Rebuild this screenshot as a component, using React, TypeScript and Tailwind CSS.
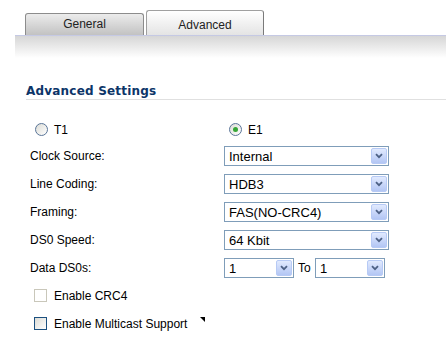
import React from "react";

function Arrow() {
  return (
    <span className="flex h-[16px] w-[16px] shrink-0 items-center justify-center rounded-[2px] border border-[#b7caf5] bg-gradient-to-b from-[#e1eafe] to-[#b3c6f4]">
      <svg width="8" height="6" viewBox="0 0 8 6">
        <path d="M1 1.2 L4 4.2 L7 1.2" stroke="#4d6185" strokeWidth="1.8" fill="none" />
      </svg>
    </span>
  );
}

function Select({ value, w }: { value: string; w: string }) {
  return (
    <div className={`flex h-[20px] items-center border border-[#7f9db9] bg-white pl-[4px] pr-[1px] ${w}`}>
      <span className="flex-1 text-[13px] leading-none text-black">{value}</span>
      <Arrow />
    </div>
  );
}

function Row({ label, children }: { label: string; children: React.ReactNode }) {
  return (
    <div className="flex h-[20px] items-center pl-[30px]">
      <span className="w-[194px] text-[12px] text-black">{label}</span>
      {children}
    </div>
  );
}

function Radio({ checked }: { checked?: boolean }) {
  return (
    <span className="flex h-[13px] w-[13px] items-center justify-center rounded-full border border-[#5a7598] bg-gradient-to-br from-[#dcdcd6] to-white">
      {checked && <span className="h-[5px] w-[5px] rounded-full bg-[#36a636]" />}
    </span>
  );
}

export default function App() {
  return (
    <div className="h-[363px] w-[446px] overflow-hidden bg-white pt-[10px] font-['Liberation_Sans',Arial,sans-serif]">
      {/* tabs */}
      <div className="ml-[15px] flex h-[25px] items-end gap-[2px] pl-[10px] text-[12px] text-[#222]">
        <div className="flex h-[22px] w-[119px] justify-center rounded-t-[3px] border border-b-0 border-[#8c8c8c] bg-gradient-to-b from-[#ececec] to-[#c2c2c2] pt-[1px]">
          General
        </div>
        <div className="flex h-[25px] w-[118px] justify-center rounded-t-[3px] border border-b-0 border-r-[#7a7a7a] border-[#a0a0a0] bg-gradient-to-b from-white to-[#e4e4e4] pt-[5px]">
          Advanced
        </div>
      </div>
      <div className="ml-[15px] h-px bg-[#c5c9e4]" />
      <div className="ml-[15px] h-[22px] bg-gradient-to-b from-[#d6d6d6] to-white" />

      {/* section header */}
      <div className="ml-[26px] mt-[25px] h-[17px] border-b border-[#e0e0e0] font-['DejaVu_Sans',Verdana,sans-serif] text-[12px] font-bold leading-[16px] tracking-[0.2px] text-[#0c3568]">
        Advanced Settings
      </div>

      {/* T1 / E1 */}
      <div className="mt-[23px] flex h-[13px] items-center pl-[35px] text-[12px] text-black">
        <div className="flex w-[194px] items-center gap-[6px]">
          <Radio />
          <span>T1</span>
        </div>
        <div className="flex items-center gap-[6px]">
          <Radio checked />
          <span>E1</span>
        </div>
      </div>

      <div className="mt-[10px] flex flex-col gap-[8px]">
        <Row label="Clock Source:">
          <Select value="Internal" w="w-[165px]" />
        </Row>
        <Row label="Line Coding:">
          <Select value="HDB3" w="w-[165px]" />
        </Row>
        <Row label="Framing:">
          <Select value="FAS(NO-CRC4)" w="w-[165px]" />
        </Row>
        <Row label="DS0 Speed:">
          <Select value="64 Kbit" w="w-[165px]" />
        </Row>
        <Row label="Data DS0s:">
          <Select value="1" w="w-[70px]" />
          <span className="w-[21px] pl-[4px] text-[12px] text-black">To</span>
          <Select value="1" w="w-[70px]" />
        </Row>
      </div>

      {/* checkboxes */}
      <div className="mt-[11px] flex h-[13px] items-center pl-[34px] text-[12px] text-black">
        <span className="h-[13px] w-[13px] border border-[#c9c7ba] bg-white" />
        <span className="ml-[7px]">Enable CRC4</span>
      </div>
      <div className="mt-[15px] flex h-[13px] items-center pl-[34px] text-[12px] text-black">
        <span className="h-[13px] w-[13px] border border-[#1c5180] bg-gradient-to-br from-[#dcdcd6] to-white" />
        <span className="ml-[7px]">Enable Multicast Support</span>
        <svg className="ml-[13px] self-start" width="5" height="5" viewBox="0 0 5 5">
          <polygon points="0,0 5,0 5,5" fill="#000" />
        </svg>
      </div>
    </div>
  );
}
